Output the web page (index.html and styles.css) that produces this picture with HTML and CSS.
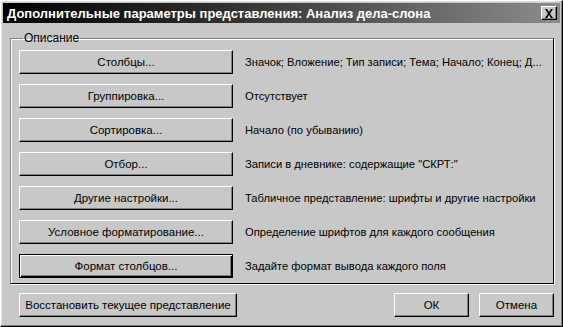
FILE: index.html
```html
<!DOCTYPE html>
<html lang="ru">
<head>
    <meta charset="UTF-8">
    <title>Дополнительные параметры представления</title>
    <link rel="stylesheet" href="styles.css">
</head>
<body>
    <div class="dialog">
        <div class="titlebar">
            <span class="title">Дополнительные параметры представления: Анализ дела-слона</span>
            <span class="close-btn">
                <svg width="10" height="9" viewBox="0 0 10 9">
                    <path d="M1 0h2l2 3 2-3h2L6 4.5 9 9H7L5 6 3 9H1l3-4.5z" fill="#000"/>
                </svg>
            </span>
        </div>

        <div class="content">
            <fieldset class="group">
                <legend>Описание</legend>
                <div class="row">
                    <button class="btn">Столбцы...</button>
                    <span class="desc">Значок; Вложение; Тип записи; Тема; Начало; Конец; Д...</span>
                </div>
                <div class="row">
                    <button class="btn">Группировка...</button>
                    <span class="desc">Отсутствует</span>
                </div>
                <div class="row">
                    <button class="btn">Сортировка...</button>
                    <span class="desc">Начало (по убыванию)</span>
                </div>
                <div class="row">
                    <button class="btn">Отбор...</button>
                    <span class="desc">Записи в дневнике: содержащие "СКРТ:"</span>
                </div>
                <div class="row">
                    <button class="btn">Другие настройки...</button>
                    <span class="desc">Табличное представление: шрифты и другие настройки</span>
                </div>
                <div class="row">
                    <button class="btn">Условное форматирование...</button>
                    <span class="desc">Определение шрифтов для каждого сообщения</span>
                </div>
                <div class="row">
                    <button class="btn default">Формат столбцов...</button>
                    <span class="desc">Задайте формат вывода каждого поля</span>
                </div>
            </fieldset>

            <div class="footer">
                <button class="btn reset">Восстановить текущее представление</button>
                <div class="spacer"></div>
                <button class="btn small">ОК</button>
                <button class="btn small">Отмена</button>
            </div>
        </div>
    </div>
</body>
</html>
```

FILE: styles.css
```css
/* Окно в стиле классической Windows, оттенки серого */
:root {
    --face: #c8c8c8;
    --light: #ffffff;
    --shadow: #808080;
    --dark: #000000;
}

body {
    margin: 0;
    padding: 0;
    background: var(--face);
    font-family: "Liberation Sans", Arial, sans-serif;
    font-size: 11px;
    color: #000;
}

.dialog {
    width: 563px;
    height: 327px;
    box-sizing: border-box;
    background: var(--face);
    border: 1px solid var(--light);
    border-right-color: var(--dark);
    border-bottom-color: var(--dark);
    box-shadow: inset -1px -1px 0 var(--shadow), inset 1px 1px 0 #e0e0e0;
    display: flex;
    flex-direction: column;
    padding: 2px;
}

/* Заголовок */
.titlebar {
    height: 20px;
    background: linear-gradient(to right, #000 0%, #303030 40%, #8c8c8c 100%);
    display: flex;
    align-items: center;
    padding: 0 3px 0 3px;
}

.title {
    flex: 1;
    color: #fff;
    font-weight: bold;
    font-size: 13px;
    white-space: nowrap;
    padding-left: 1px;
}

.close-btn {
    width: 16px;
    height: 14px;
    box-sizing: border-box;
    background: var(--face);
    border: 1px solid var(--light);
    border-right-color: var(--dark);
    border-bottom-color: var(--dark);
    box-shadow: inset -1px -1px 0 var(--shadow);
    display: flex;
    align-items: center;
    justify-content: center;
}

.content {
    flex: 1;
    padding: 8px 6px 0 7px;
    display: flex;
    flex-direction: column;
}

/* Группа "Описание" */
.group {
    margin: 0;
    padding: 5px 8px 5px 8px;
    border: 1px solid var(--shadow);
    border-right-color: var(--dark);
    border-bottom-color: var(--dark);
    box-shadow: inset 1px 1px 0 var(--light), 1px 1px 0 var(--light);
    display: flex;
    flex-direction: column;
    gap: 10px;
}

.group legend {
    padding: 0 1px;
    margin-left: 4px;
    font-size: 12px;
}

.row {
    display: flex;
    align-items: center;
    gap: 12px;
}

.desc {
    white-space: nowrap;
    font-size: 11.2px;
}

/* Кнопки */
.btn {
    font-family: inherit;
    font-size: 11.5px;
    color: #000;
    background: var(--face);
    width: 214px;
    height: 24px;
    padding: 0;
    border: 1px solid var(--light);
    border-right-color: var(--dark);
    border-bottom-color: var(--dark);
    box-shadow: inset -1px -1px 0 var(--shadow);
    flex-shrink: 0;
}

.btn.default {
    border: 1px solid var(--dark);
    box-shadow: inset 1px 1px 0 var(--light), inset -1px -1px 0 var(--dark), inset -2px -2px 0 var(--shadow);
}

.footer {
    display: flex;
    align-items: center;
    gap: 10px;
    margin-top: 9px;
    padding-left: 9px;
}

.btn.reset {
    width: 218px;
}

.btn.small {
    width: 75px;
}

.spacer {
    flex: 1;
}
```
